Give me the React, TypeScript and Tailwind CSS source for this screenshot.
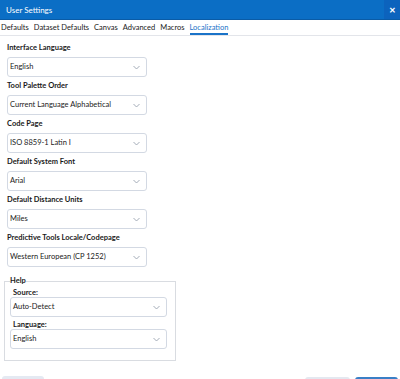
import React from "react";

const font = { fontFamily: 'Lato, "Noto Sans", sans-serif' };

function Chevron() {
  return (
    <svg width="7" height="5" viewBox="0 0 7 5" className="shrink-0">
      <path d="M0.5 1 L3.5 4 L6.5 1" fill="none" stroke="#9aa3b0" strokeWidth="0.9" />
    </svg>
  );
}

function Select({ value, className = "" }: { value: string; className?: string }) {
  return (
    <div
      className={`h-[20px] flex items-center justify-between pl-[2px] pr-[6px] border border-[#d3d9e3] rounded-[3px] bg-white text-[7.5px] text-[#1a1a1a] ${className}`}
    >
      <span>{value}</span>
      <Chevron />
    </div>
  );
}

function Field({ label, value }: { label: string; value: string }) {
  return (
    <div className="flex flex-col">
      <div className="text-[7.5px] font-bold text-[#1a1a1a] h-[18px] leading-[16px] pt-[1px]">{label}</div>
      <Select value={value} className="w-[140px]" />
    </div>
  );
}

export default function App() {
  return (
    <div className="w-[400px] h-[379px] bg-white overflow-hidden flex flex-col relative" style={font}>
      <div className="h-[20px] shrink-0 bg-[#0b6ec5] flex items-center justify-between border-b border-[#0a5ba6]">
        <span className="pl-[6px] text-white text-[8px]">User Settings</span>
        <div className="w-[16px] h-full bg-[#0c63bd] flex items-center justify-center text-white text-[8px] font-bold">
          ✕
        </div>
      </div>
      <div className="h-[16px] shrink-0 flex items-end border-b border-[#e3e5ea] text-[7.5px] text-[#1a1a1a] gap-[5px] pl-[1px]">
        <span className="pb-[2px]">Defaults</span>
        <span className="pb-[2px]">Dataset Defaults</span>
        <span className="pb-[2px]">Canvas</span>
        <span className="pb-[2px]">Advanced</span>
        <span className="pb-[2px]">Macros</span>
        <span className="pb-[0px] text-[#1a73c8] border-b-2 border-[#1a73c8]">Localization</span>
      </div>
      <div className="flex flex-col pl-[7px] pt-[3px]">
        <Field label="Interface Language" value="English" />
        <Field label="Tool Palette Order" value="Current Language Alphabetical" />
        <Field label="Code Page" value="ISO 8859-1 Latin I" />
        <Field label="Default System Font" value="Arial" />
        <Field label="Default Distance Units" value="Miles" />
        <Field label="Predictive Tools Locale/Codepage" value="Western European (CP 1252)" />
      </div>
      <fieldset className="ml-[4px] mt-[9px] w-[170px] h-[85px] shrink-0 border border-[#d9dce1] px-[8px]">
        <legend className="-ml-[3px] text-[7.5px] font-bold text-[#1a1a1a] leading-[10px] px-0">Help</legend>
        <div className="text-[7.5px] font-bold text-[#1a1a1a] leading-[8px] mt-[3px]">Source:</div>
        <Select value="Auto-Detect" className="w-[157px] -ml-[3px]" />
        <div className="text-[7.5px] font-bold text-[#1a1a1a] leading-[8px] mt-[4px]">Language:</div>
        <Select value="English" className="w-[157px] -ml-[3px]" />
      </fieldset>
      <div className="absolute left-[2px] top-[376px] w-[42px] h-[10px] rounded-[3px] bg-[#e4e9f2]" />
      <div className="absolute left-[305px] top-[377px] w-[45px] h-[10px] rounded-[3px] bg-[#e4e8f0]" />
      <div className="absolute left-[355px] top-[377px] w-[43px] h-[10px] rounded-[3px] bg-[#3a7fc6]" />
    </div>
  );
}
